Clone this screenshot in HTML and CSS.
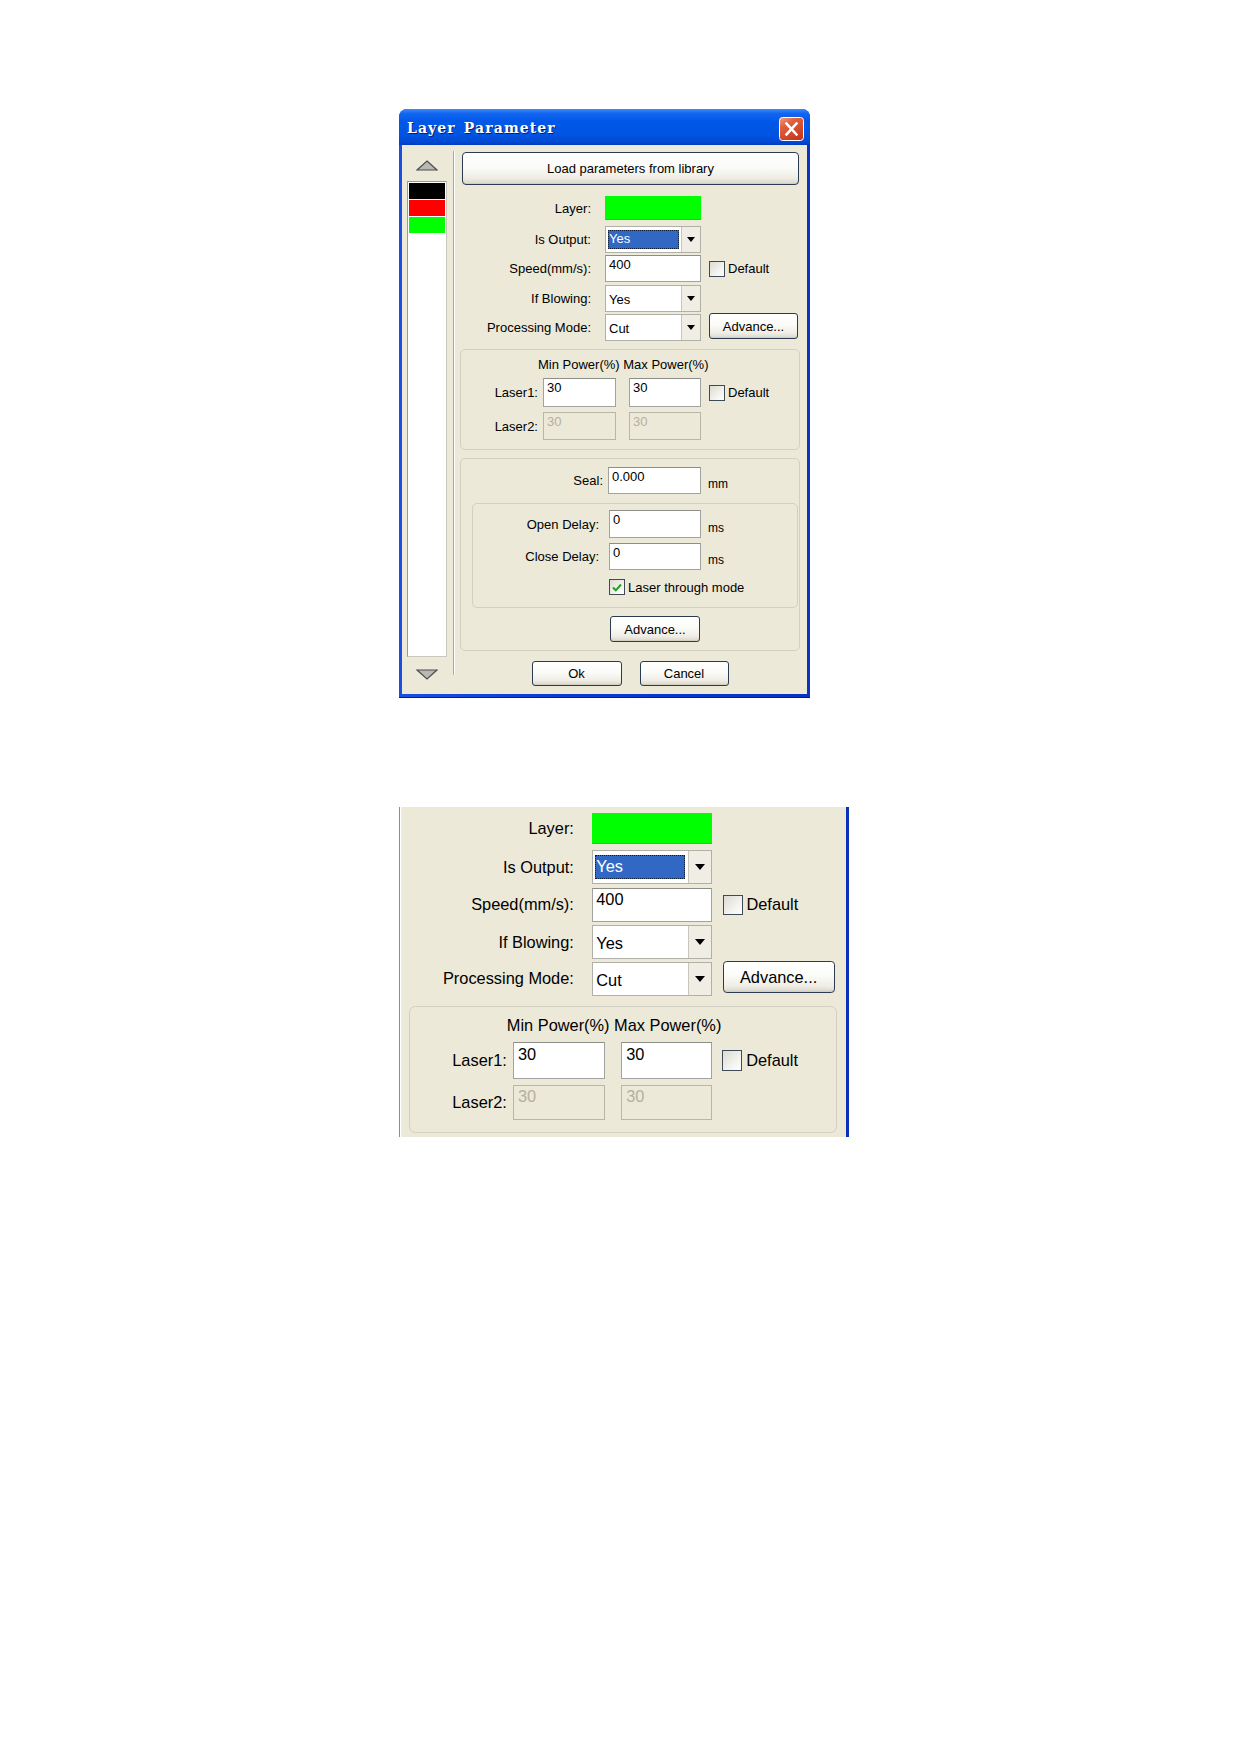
FILE: index.html
```html
<!DOCTYPE html>
<html lang="en">
<head>
<meta charset="utf-8">
<title>Layer Parameter</title>
<link rel="stylesheet" href="styles.css">
</head>
<body>
<main class="page">

  <section class="window">
    <header class="titlebar">
      <span class="title">Layer Parameter</span>
      <span class="close" aria-label="Close">
        <svg width="25" height="24" viewBox="0 0 25 24">
          <defs>
            <linearGradient id="closeFill" x1="0" y1="0" x2="0.6" y2="1">
              <stop offset="0" stop-color="#f0a184"/>
              <stop offset="0.35" stop-color="#e2603d"/>
              <stop offset="1" stop-color="#c63b1c"/>
            </linearGradient>
          </defs>
          <rect x="0.5" y="0.5" width="24" height="23" rx="3" fill="url(#closeFill)" stroke="#ffffff"/>
          <path d="M7.5 6.5 L17.5 17.5 M17.5 6.5 L7.5 17.5" stroke="#ffffff" stroke-width="2.6" stroke-linecap="square"/>
        </svg>
      </span>
    </header>

    <div class="window-body">
      <aside class="layer-pane">
        <svg class="arrow" width="22" height="11" viewBox="0 0 22 11">
          <polygon points="11,1 21,10 1,10" fill="#b9b9b4" stroke="#4d4d4d" stroke-width="1.2"/>
        </svg>
        <ul class="layer-list">
          <li class="swatch black"></li>
          <li class="swatch red"></li>
          <li class="swatch green"></li>
        </ul>
        <svg class="arrow arrow-down" width="22" height="11" viewBox="0 0 22 11">
          <polygon points="1,1 21,1 11,10" fill="#b9b9b4" stroke="#4d4d4d" stroke-width="1.2"/>
        </svg>
      </aside>

      <div class="divider"></div>

      <div class="param-pane">
        <button class="btn btn-load">Load parameters from library</button>

        <div class="form-grid">
          <span class="label">Layer:</span>
          <span class="color-field"></span>
          <span></span>

          <span class="label">Is Output:</span>
          <span class="combo"><span class="combo-value is-selected"><span>Yes</span></span><span class="combo-btn"></span></span>
          <span></span>

          <span class="label">Speed(mm/s):</span>
          <span class="input">400</span>
          <label class="check"><span class="box"></span>Default</label>

          <span class="label">If Blowing:</span>
          <span class="combo"><span class="combo-value">Yes</span><span class="combo-btn"></span></span>
          <span></span>

          <span class="label">Processing Mode:</span>
          <span class="combo"><span class="combo-value">Cut</span><span class="combo-btn"></span></span>
          <button class="btn btn-advance-top">Advance...</button>
        </div>

        <div class="group power-group">
          <div class="power-head">Min Power(%) Max Power(%)</div>
          <div class="power-grid">
            <span class="label">Laser1:</span>
            <span class="input">30</span>
            <span class="input">30</span>
            <label class="check"><span class="box"></span>Default</label>

            <span class="label">Laser2:</span>
            <span class="input is-disabled">30</span>
            <span class="input is-disabled">30</span>
            <span></span>
          </div>
        </div>

        <div class="group seal-group">
          <div class="seal-grid">
            <span class="label">Seal:</span>
            <span class="input">0.000</span>
            <span class="unit">mm</span>
          </div>

          <div class="group delay-group">
            <div class="delay-grid">
              <span class="label">Open Delay:</span>
              <span class="input">0</span>
              <span class="unit">ms</span>

              <span class="label">Close Delay:</span>
              <span class="input">0</span>
              <span class="unit">ms</span>

              <span></span>
              <label class="check check-wide"><span class="box is-checked">
                <svg width="10" height="9" viewBox="0 0 10 9"><path d="M1 4.5 L3.8 7.3 L9 1.5" fill="none" stroke="#21a121" stroke-width="2"/></svg>
              </span>Laser through mode</label>
              <span></span>
            </div>
          </div>

          <button class="btn btn-advance">Advance...</button>
        </div>

        <div class="dialog-actions">
          <button class="btn btn-ok">Ok</button>
          <button class="btn btn-cancel">Cancel</button>
        </div>
      </div>
    </div>
  </section>

  <!-- enlarged view of the output/power section of the same dialog -->
  <section class="detail">
    <div class="form-grid">
      <span class="label">Layer:</span>
      <span class="color-field"></span>
      <span></span>

      <span class="label">Is Output:</span>
      <span class="combo"><span class="combo-value is-selected"><span>Yes</span></span><span class="combo-btn"></span></span>
      <span></span>

      <span class="label">Speed(mm/s):</span>
      <span class="input">400</span>
      <label class="check"><span class="box"></span>Default</label>

      <span class="label">If Blowing:</span>
      <span class="combo"><span class="combo-value">Yes</span><span class="combo-btn"></span></span>
      <span></span>

      <span class="label">Processing Mode:</span>
      <span class="combo"><span class="combo-value">Cut</span><span class="combo-btn"></span></span>
      <button class="btn btn-advance-top">Advance...</button>
    </div>

    <div class="group power-group">
      <div class="power-head">Min Power(%) Max Power(%)</div>
      <div class="power-grid">
        <span class="label">Laser1:</span>
        <span class="input">30</span>
        <span class="input">30</span>
        <label class="check"><span class="box"></span>Default</label>

        <span class="label">Laser2:</span>
        <span class="input is-disabled">30</span>
        <span class="input is-disabled">30</span>
        <span></span>
      </div>
    </div>
  </section>

</main>
</body>
</html>
```

FILE: styles.css
```css
* {
  box-sizing: border-box;
}

html,
body {
  margin: 0;
  background: #ffffff;
}

body {
  font-family: "Liberation Sans", Arial, sans-serif;
  font-size: 13px;
  line-height: 15px;
  color: #000000;
}

.page {
  display: flex;
  flex-direction: column;
  align-items: flex-start;
  gap: 109px;
  padding: 109px 0 0 399px;
}

/* ---------- window frame ---------- */

.window {
  width: 411px;
  height: 589px;
  display: flex;
  flex-direction: column;
  background: linear-gradient(90deg, #1a4fe0, #0a3bd2 40%, #0833c4);
  border-radius: 8px 8px 0 0;
  border-bottom: 1px solid #001a9c;
}

.titlebar {
  height: 36px;
  flex: none;
  display: flex;
  align-items: center;
  justify-content: space-between;
  padding: 3px 6px 0 8px;
  border-radius: 8px 8px 0 0;
  background: linear-gradient(180deg, #3d8dfb 0%, #1466f0 12%, #0058e8 35%, #0055e2 70%, #0049d4 90%, #003dbf 100%);
}

.title {
  font-family: "DejaVu Serif", "Liberation Serif", serif;
  font-weight: bold;
  font-size: 14px;
  letter-spacing: 1.1px;
  word-spacing: 2px;
  color: #ffffff;
  text-shadow: 1px 1px 0 #0a1f6b;
}

.close {
  display: block;
  width: 25px;
  height: 24px;
}

.close svg {
  display: block;
}

.window-body {
  flex: 1;
  display: flex;
  margin: 0 3px 3px;
  background: #ece9d8;
}

/* ---------- layer list ---------- */

.layer-pane {
  width: 51px;
  flex: none;
  display: flex;
  flex-direction: column;
  align-items: center;
  padding: 15px 6px 0 5px;
}

.arrow {
  display: block;
  flex: none;
}

.layer-list {
  list-style: none;
  margin: 10px 0 0;
  padding: 1px;
  width: 40px;
  height: 476px;
  background: #ffffff;
  border: 1px solid #9a9a94;
  border-right-color: #c9c7bd;
  border-bottom-color: #c9c7bd;
}

.swatch {
  height: 16px;
  margin-bottom: 1px;
}

.swatch.black { background: #000000; }
.swatch.red { background: #ff0000; }
.swatch.green { background: #00ff00; }

.arrow-down {
  margin-top: 12px;
}

.divider {
  flex: none;
  width: 2px;
  margin: 6px 0 19px;
  border-left: 1px solid #aca899;
  border-right: 1px solid #ffffff;
}

/* ---------- parameters ---------- */

.param-pane {
  flex: 1;
  display: flex;
  flex-direction: column;
  padding: 7px 7px 0 5px;
}

.btn {
  font: inherit;
  color: #000000;
  padding: 0;
  border: 1px solid #2b3b52;
  border-radius: 3px;
  background: linear-gradient(180deg, #ffffff 0%, #fbfbf8 45%, #efede5 80%, #d9d6cb 100%);
  box-shadow: inset 0 -1px 0 #d1cec2;
}

.btn-load {
  height: 33px;
  margin: 0 1px 0 2px;
  border-radius: 4px;
}

.label {
  text-align: right;
  white-space: nowrap;
}

/* label | field | extra; label column carries the 14px gap */
.form-grid {
  display: grid;
  grid-template-columns: 145px 96px auto;
  grid-template-rows: 32px 30px 29px 31px 27px;
  align-items: center;
  margin-top: 7px;
}

.form-grid > .label {
  padding-right: 14px;
}

.form-grid > :nth-child(3n) {
  margin-left: 8px;
}

.color-field {
  height: 24px;
  background: #00ff00;
  border-bottom: 1px solid #14d414;
}

.input {
  display: block;
  height: 27px;
  padding: 1px 3px;
  background: #ffffff;
  border: 1px solid #a2a2a0;
  border-top-color: #8d8d8a;
  white-space: nowrap;
}

.input.is-disabled {
  background: #ece9d8;
  color: #b3b0a2;
  border-color: #b8b6ab;
}

.combo {
  display: flex;
  height: 27px;
  background: #ffffff;
  border: 1px solid #b0afa8;
}

.combo-value {
  flex: 1;
  display: flex;
  align-items: center;
  padding: 2px 3px 0;
}

.combo-value.is-selected {
  padding: 2px;
}

.combo-value.is-selected > span {
  flex: 1;
  height: 19px;
  padding: 1px 1px 0;
  color: #ffffff;
  background: #3168c4;
  outline: 1px dotted #0c1a3a;
  outline-offset: -1px;
}

.combo-btn {
  width: 19px;
  flex: none;
  position: relative;
  background: #efede4;
  border-left: 1px solid #c9c7bd;
}

.combo-btn::after {
  content: "";
  position: absolute;
  left: 5px;
  top: 10px;
  border-left: 4px solid transparent;
  border-right: 4px solid transparent;
  border-top: 5px solid #000000;
}

.check {
  display: flex;
  align-items: center;
  gap: 3px;
  white-space: nowrap;
}

.box {
  width: 16px;
  height: 16px;
  flex: none;
  display: flex;
  align-items: center;
  justify-content: center;
  border: 1px solid #3f4a58;
  background: linear-gradient(135deg, #dcdad2 0%, #f3f2ee 60%, #ffffff 100%);
}

.btn-advance-top {
  align-self: start;
  height: 26px;
  width: 89px;
  margin-top: -1px;
}

/* ---------- group boxes ---------- */

.group {
  border: 1px solid #d3d0c3;
  border-radius: 5px;
}

.power-group {
  height: 101px;
  margin-top: 8px;
  padding: 7px 0 0;
}

.power-head {
  padding-left: 77px;
  white-space: nowrap;
}

/* label | gap+min | gap+max | default */
.power-grid {
  display: grid;
  grid-template-columns: 77px 78px 85px auto;
  grid-template-rows: 29px 28px;
  row-gap: 5px;
  align-items: center;
  margin-top: 6px;
}

.power-grid > :nth-child(4n + 2) { margin-left: 5px; }
.power-grid > :nth-child(4n + 3) { margin-left: 13px; }
.power-grid > :nth-child(4n + 4) { margin-left: 8px; }

.power-grid .input,
.delay-grid .input {
  height: 100%;
}

.seal-group {
  height: 193px;
  margin-top: 8px;
  padding: 8px 0 0;
}

.seal-grid {
  display: grid;
  grid-template-columns: 142px 98px auto;
  grid-template-rows: 27px;
  align-items: center;
}

.seal-grid > .input { margin-left: 5px; }

.unit {
  margin-left: 7px;
  padding-top: 8px;
  font-size: 12px;
}

.delay-group {
  margin: 9px 1px 0 11px;
  height: 105px;
  padding: 6px 0 0;
}

.delay-grid {
  display: grid;
  grid-template-columns: 126px 102px auto;
  grid-template-rows: 28px 27px 16px;
  row-gap: 5px;
  align-items: center;
}

.delay-grid > :nth-child(3n + 2) { margin-left: 10px; }
.delay-grid > :nth-child(3n + 3) { margin-left: 7px; }

.delay-grid > .check-wide {
  margin-top: 8px;
}

.btn-advance {
  display: block;
  width: 90px;
  height: 26px;
  margin: 8px 0 0 149px;
}

/* ---------- dialog buttons ---------- */

.dialog-actions {
  display: flex;
  justify-content: center;
  gap: 18px;
  margin-top: 10px;
}

.btn-ok,
.btn-cancel {
  height: 25px;
  width: 90px;
}

.btn-cancel {
  width: 89px;
}

/* ---------- enlarged section ---------- */

.detail {
  zoom: 1.26;
  width: 357px;
  height: 262px;
  padding: 1px 7px 0 7px;
  background: #ece9d8;
  border-left: 1px solid #8f8d84;
  box-shadow: inset 1px 0 0 #ffffff;
  border-right: 3px solid #0a2fb8;
}

.detail .form-grid {
  margin-top: 0;
}
```
